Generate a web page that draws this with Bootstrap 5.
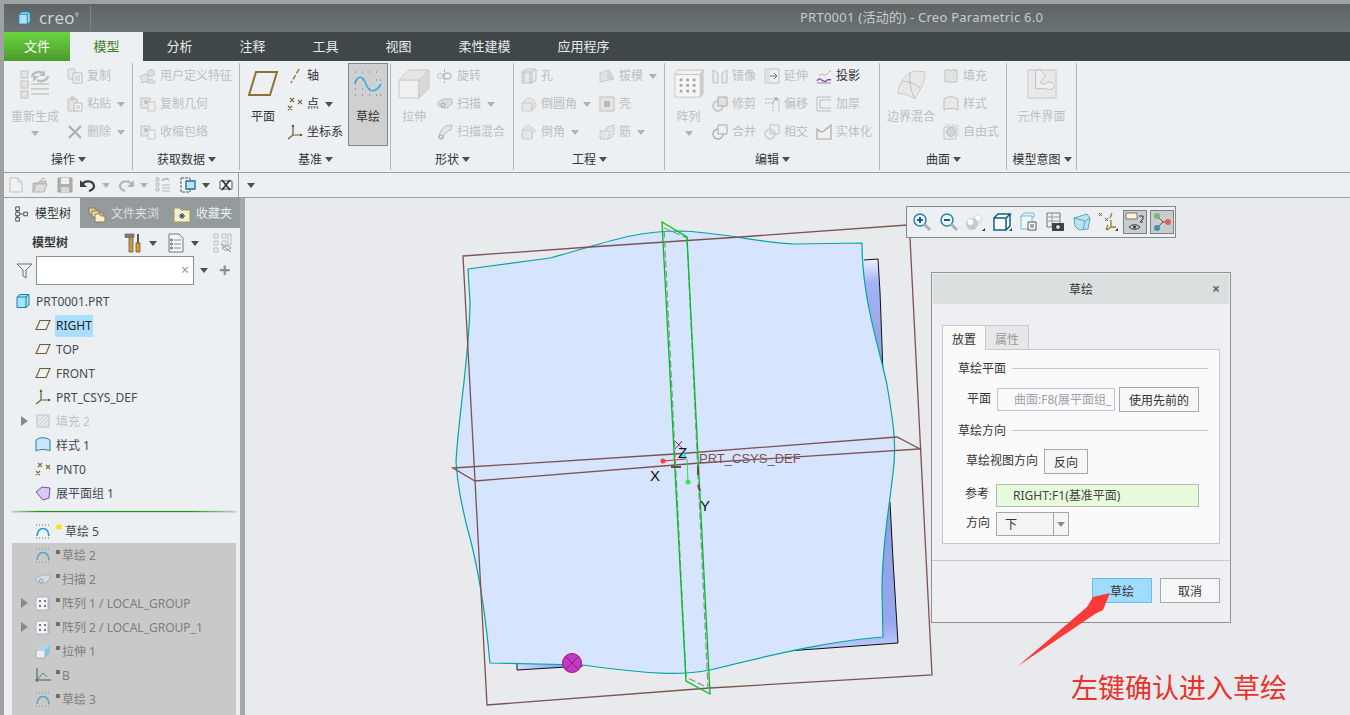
<!DOCTYPE html>
<html lang="zh-CN">
<head>
<meta charset="utf-8">
<title>PRT0001 (活动的) - Creo Parametric 6.0</title>
<link rel="stylesheet" href="https://cdn.jsdelivr.net/npm/bootstrap@5.3.0/dist/css/bootstrap.min.css">
<style>
html,body{height:715px;overflow:hidden;margin:0}
body{background:#a0a2a2;font:12px/16px "Noto Sans","Noto Sans CJK SC",sans-serif;color:#333}
.app{height:715px;padding:4px 0 0 4px}
.titlebar{height:28px;background:linear-gradient(#5d6465,#6b7374);color:#c9cccb}
.logo-cube{width:15px;height:16px;margin-left:13px}
.logo-word{font:17px/28px "Open Sans",sans-serif;color:#d5d8d8;margin-left:7px;letter-spacing:.2px}
.logo-reg{font-size:5px;vertical-align:top;line-height:22px}
.logo-sep{width:1px;height:24px;background:#7f8888;margin-left:11px}
.app-title{position:absolute;left:796px;top:4px;font-size:13px;line-height:18px;letter-spacing:.25px}
.tabrow{height:29px;background:#3f4748}
.tabrow .nav-link{height:29px;padding:6px 23.5px;font-size:13px;line-height:17px;color:#e8ecec;border:0;border-radius:0}
.tabrow .tab-file{padding:6px 20px;background:linear-gradient(#6ad53f,#4b9a2f);color:#fff}
.tabrow .tab-on{background:#edf0f2;color:#3f7a1e}
.ribbon{height:112px;background:#edf0f2;border-bottom:1px solid #9b9e9f}
.rgroup{height:111px;position:relative;display:flex;flex-direction:column}
.rgroup::after{content:"";position:absolute;right:0;top:2px;bottom:2px;width:1px;background:#b4b7b7}
.rbody{height:85px;display:flex;padding-top:1px}
.rlabel{height:26px;text-align:center;color:#333;line-height:28px}
.g1{width:129px}.g2{width:107px}.g3{width:151px}.g4{width:123px}.g5{width:151px}.g6{width:215px}.g7{width:127px}.g8{width:70px}
.rbig{display:flex;flex-direction:column;align-items:center;padding-top:7px;color:#bcbebe;flex:none}
.rbig svg{width:32px;height:30px;flex:none}
.rbig span{margin-top:10px;white-space:nowrap}
.w62{width:62px}.w46{width:46px}.w44{width:47px}.w69{width:69px}
.rcol{display:flex;flex-direction:column;flex:none}
.cw78{width:78px}.cw52{width:52px}
.pl7{padding-left:7px}.pl1{padding-left:1px}
.ritem{height:28px;display:flex;align-items:center;gap:4px;color:#bcbebe;white-space:nowrap}
.ritem svg{width:16px;height:16px;flex:none}
.on{color:#333}
.caret-d{width:0;height:0;border:4px solid transparent;border-top:5px solid #8b8d8d;border-bottom:0;display:inline-block;flex:none}
.caret-k{border-top-color:#4b4f50}
.caret-l{border-top-color:#b0b2b2}
.ritem .caret-d{margin-left:2px}
.rbig .caret-d{margin-top:6px}
.rlabel .caret-d{margin-left:3px;vertical-align:2px}
.sketchbtn{width:40px;height:83px;margin:1px 3px 0 auto;background:#cfd0d2;border:1px solid #85888a;display:flex;flex-direction:column;align-items:center;padding-top:5px;color:#333}
.sketchbtn svg{width:28px;height:28px}
.sketchbtn span{margin-top:12px}
.qat{height:25px;background:#edf0f2;border-bottom:1px solid #9b9e9f}
.qat-l{width:235px;height:24px;border-right:1px solid #9b9e9f;padding-left:4px}
.qat svg{width:16px;height:16px;flex:none}
.qm6{margin-left:6px}.qm7{margin-left:7px}.qm8{margin-left:8px}.qm9{margin-left:9px}
.main{height:518px}
.side{width:236px;background:#edf0f2;height:518px;overflow:hidden;flex:none}
.side-tabs{height:30px;background:#939b9c;color:#eef0f0}
.stab{height:30px;display:flex;align-items:center;gap:5px;white-space:nowrap;padding-top:1px}
.stab svg{width:18px;height:18px;flex:none}
.stab-on{width:76px;background:#edf0f2;color:#333;padding-left:10px}
.stab-on svg{width:16px;height:16px}
.stab-2{width:81px;padding-left:8px}
.stab-3{padding-left:12px}
.fadew{opacity:.8}
.tree-top{height:27px;padding:3px 8px 0 28px}
.tree-top b{font-weight:700;color:#3a3a3a}
.tree-top .tool{width:18px;height:20px;flex:none}
.tree-top .toolw{width:20px}
.tm7{margin-right:7px}.tm10{margin-right:10px}.tm6{margin-right:6px}.tm13{margin-right:13px}
.filter{height:30px;padding-left:12px}
.filter>svg{width:17px;height:17px;margin-right:3px}
.search-box{width:158px;height:29px;border:1px solid #8b8e8e;background:#fff;position:relative}
.search-x{position:absolute;right:4px;top:5px;color:#9a9a9a;font-size:14px}
.plus-g{font-size:20px;line-height:20px;color:#8e9090;font-weight:700;margin-left:11px}
.tree{padding-top:4px}
.trow{height:24px;display:flex;align-items:center;padding-left:31px;padding-top:2px;white-space:nowrap;color:#3f4a55;position:relative}
.trow>svg{width:16px;height:16px;margin-right:5px;flex:none;margin-top:-2px}
.trow-root{padding-left:11px}
.tsel{background:#aadeff;padding:3px 1px;margin-left:-1px;color:#222}
.tdim{color:#c0c2c2}
.tri{position:absolute;left:17px;top:7px;width:0;height:0;border:5px solid transparent;border-left:7px solid #888a8a;border-right:0}
.grayblk .tri{left:9px}
.tsep{height:14px;padding:6px 4px 0 8px}
.tsep div{height:1px;background:linear-gradient(90deg,#c7d2c4,#0e9a14 12%,#0e9a14 80%,#c7d2c4);box-shadow:0 1px 0 #cfd6cf,0 -1px 0 #dfe4df}
.grayblk{background:#c9c9c9;margin:0 4px 0 8px;height:172px}
.grayblk .trow{padding-left:23px;color:#7d7f80}
.mk{display:inline-block;width:4px;height:4px;background:#6e7070;margin-right:2px;align-self:flex-start;margin-top:5px;flex:none}
.trow>svg.star-y{width:6px;height:6px;margin:3px 3px 0 0;align-self:flex-start;flex:none}
.gutter{width:5px;background:#a4a8a8;flex:none}
.canvas{flex:1;position:relative;background:#e8eaed;overflow:hidden}
.canvas-svg{display:block;width:1105px;height:518px}
.ftool{position:absolute;left:661px;top:8px;width:270px;height:32px;background:#edf0f2;border:1px solid #85888a;padding-left:2px}
.ftool svg{width:20px;height:20px;flex:none}
.fcell{width:26.6px;height:30px;display:flex;align-items:center;justify-content:center;flex:none}
.fon{background:#c9cbcd;border:1px solid #7d8082;height:24px;width:24px;margin:0 1.3px}
.dlg{position:absolute;left:686px;top:74px;width:300px;height:351px;background:#eeeff2;border:1px solid #8f9292}
.dlg-h{height:30px;margin:1px 1px 0;background:#dcdfe0;text-align:center;line-height:32px;color:#333;position:relative}
.dlg-x{position:absolute;right:9px;top:-1px;font-weight:700;font-size:14px;color:#666}
.dlg-body{padding:21px 10px 0}
.dlg-tabs{height:24px}
.dtab{height:24px;width:44px;text-align:center;line-height:27px;border:1px solid #c6c8c9;border-bottom:0;background:#e6e7e9;color:#9a9c9c}
.dtab-on{background:#fafafb;color:#333;height:25px;position:relative;z-index:2;width:44px;margin-right:-1px}
.dpanel{height:195px;width:278px;border:1px solid #c6c8c9;background:#fafafb;padding:0 11px 0 15px}
.dp-sec{height:36px;display:flex;align-items:center;gap:6px;padding-top:1px}
.dp-sec i{flex:1;height:1px;background:#c6c8c9}
.dp-row{display:flex;align-items:flex-end;white-space:nowrap}
.dp-row label{line-height:18px;padding-bottom:4px;margin:0}
.r1{height:26px;padding-left:9px;gap:6px}
.r2{height:26px;padding-left:8px;gap:6px}
.r3{height:23px;margin-top:10px;padding-left:7px;gap:7px}
.r4{height:24px;margin-top:5px;padding-left:8px;gap:6px}
.dinput{border:1px solid #c4c4cc;background:#fafafd;color:#a0a0a4;white-space:nowrap;overflow:hidden;padding-left:16px;line-height:22px;height:23px;margin-bottom:1px}
.i-srf{width:118px}
.i-ref{width:203px;margin:0;border-color:#b6b8b8;background:#e8fadc;color:#444}
.dbtn{border:1px solid #a6a8a8;background:#f6f6f7;text-align:center;color:#333;padding:2px 0 0;height:25px;line-height:18px}
.b-prev{width:80px;margin-left:-2px}
.b-rev{width:44px}
.d-sel{width:73px;height:24px;border:1px solid #a6a8a8;background:#f4f4f5;display:flex;line-height:24px;color:#333}
.d-sel span{flex:1;padding-left:8px}
.d-sel em{width:15px;border-left:1px solid #a6a8a8;display:flex;align-items:center;justify-content:center}
.dline{height:1px;margin-top:16px;background:#c6c8c9}
.dfoot{padding:17px 10px 0 0;gap:8px}
.dok{background:#a0dcff;border-color:#62bfee}
.dbtn-b{width:60px}
.arrow-ov{position:absolute;left:770px;top:375px;width:110px;height:100px}
.note{position:absolute;left:826px;top:471px;font:27px/36px "Noto Sans CJK SC",sans-serif;color:#e8322a;white-space:nowrap}
.g3 .rbig{color:#333}
</style>
</head>
<body>
<svg width="0" height="0" class="position-absolute">
<defs>
<symbol id="cube" viewBox="0 0 16 16"><path d="M2 4 5 1.500h9V12l-3 2.500H2z" fill="#a9e2f8" stroke="#1f7fa8"/><path d="M11 14.500V4H2M11 4l3-2.500" fill="none" stroke="#1f7fa8"/></symbol>
<symbol id="regen" viewBox="0 0 32 30"><g fill="#e4e4e4" stroke="#c0c0c0"><rect x="2" y="2" width="7" height="7"/><rect x="2" y="12" width="7" height="7"/><rect x="2" y="22" width="7" height="7"/></g><path d="M13 8a7 6 0 0 1 12-3M29 7a7 6 0 0 1-11 4" fill="none" stroke="#bdbdbd" stroke-width="2.500"/><path d="M26 1v6h-6zM14 13V7h6z" fill="#bdbdbd"/><path d="M12 15h18M12 20h18M12 25h18" stroke="#c4c4c4" stroke-width="1.500"/></symbol>
<symbol id="copy" viewBox="0 0 16 16"><path d="M1 1h7v10H1z" fill="#e8e8e8" stroke="#c4c4c4"/><path d="M6 5h9v10H6z" fill="#f2f2f2" stroke="#bcbcbc"/><path d="M8 8h5M8 10h5M8 12h5" stroke="#c0c0c0"/></symbol>
<symbol id="paste" viewBox="0 0 16 16"><path d="M1 3h9v12H1z" fill="#e4e4e4" stroke="#c0c0c0"/><path d="M4 1h3v3H4z" fill="#d4d4d4" stroke="#c0c0c0"/><path d="M7 7h8v8H7z" fill="#f2f2f2" stroke="#bcbcbc"/><path d="M9 10h4M9 12h4" stroke="#c0c0c0"/></symbol>
<symbol id="del" viewBox="0 0 16 16"><path d="M2 2l12 12M14 2 2 14" stroke="#aeaeae" stroke-width="2.400"/></symbol>
<symbol id="udf" viewBox="0 0 16 16"><rect x="1" y="7" width="7" height="7" fill="#e4e4e4" stroke="#c4c4c4" transform="rotate(-15 4 10)"/><circle cx="11" cy="5" r="3.500" fill="#dedede" stroke="#c8c8c8"/><path d="M7 15c0-5 8-5 8 0z" fill="#dedede" stroke="#c8c8c8"/></symbol>
<symbol id="cgeo" viewBox="0 0 16 16"><path d="M1 2h9v10H1z" fill="#e6e6e6" stroke="#c0c0c0"/><path d="M8 6h7v9H8z" fill="#efefef" stroke="#c8c8c8"/><path d="M4 4l3 3M7 4v3H4" stroke="#a8a8a8" fill="none"/></symbol>
<symbol id="plane" viewBox="0 0 32 30"><path d="M9 3h21L23 26H2z" fill="none" stroke="#8f7233" stroke-width="2"/></symbol>
<symbol id="tplane" viewBox="0 0 16 16"><path d="M5 3.500h10L11 12.500H1z" fill="none" stroke="#6e5a30" stroke-width="1.100"/></symbol>
<symbol id="axis" viewBox="0 0 16 16"><path d="M12 1 4 15" stroke="#8f7233" stroke-width="1.400" stroke-dasharray="5 2" fill="none"/></symbol>
<symbol id="pt" viewBox="0 0 16 16"><path d="M3 1l4 4M7 1 3 5M11 3l4 4M15 3l-4 4M1 9l4 4M5 9l-4 4" stroke="#7c6a3c" stroke-width="1.200" fill="none" transform="translate(0 1)"/></symbol>
<symbol id="csys" viewBox="0 0 16 16"><path d="M6 1v10l-5 4M6 11h9" fill="none" stroke="#6e5a30" stroke-width="1.200"/><path d="M4.500 3 6 0l1.500 3zM13 9.500l3 1.500-3 1.500z" fill="#6e5a30"/></symbol>
<symbol id="sketch" viewBox="0 0 28 28"><path d="M1 15c2-9 8-9 11 0 3 9 10 9 15 0" fill="none" stroke="#39aee0" stroke-width="1.700"/><path d="M1 3h1M8 3h1M15 3h1M22 3h1M1 12h1M8 11h1M22 11h1M26 11h1M1 20h1M8 20h1M15 20h1M1 26h1M8 26h1M15 26h1M22 26h1M26 26h1" stroke="#6a6a6a"/></symbol>
<symbol id="extrude" viewBox="0 0 32 30"><path d="M1 11h20v18H1z" fill="#f0f0f0" stroke="#c8c8c8"/><path d="M1 11 11 1h20L21 11z" fill="#e6e6e6" stroke="#c8c8c8"/><path d="M21 11 31 1v18L21 29z" fill="#d8d8d8" stroke="#c8c8c8"/></symbol>
<symbol id="rev" viewBox="0 0 16 16"><ellipse cx="10" cy="8" rx="4" ry="3" fill="none" stroke="#bcbcbc" stroke-width="1.500"/><ellipse cx="3" cy="8" rx="2.500" ry="2.500" fill="none" stroke="#c4c4c4"/><path d="M7.500 1v14" stroke="#b0b0b0" stroke-dasharray="3 1"/></symbol>
<symbol id="sweep" viewBox="0 0 16 16"><path d="M1 6 6 3h9v5l-5 4H5L1 9z" fill="#dcdcdc" stroke="#bcbcbc"/><circle cx="6" cy="9" r="2" fill="none" stroke="#a8a8a8"/></symbol>
<symbol id="tsweep" viewBox="0 0 16 16"><path d="M1 7 7 4h8v4l-5 4H5L1 10z" fill="#d8dde0" stroke="#a8b4ba"/><circle cx="6" cy="10" r="2" fill="none" stroke="#8aa0aa"/></symbol>
<symbol id="sblend" viewBox="0 0 16 16"><path d="M2 12C4 4 8 1 15 1l-1 5C9 7 7 10 6 15l-4-1z" fill="#e4e4e4" stroke="#bcbcbc"/><circle cx="4" cy="13" r="2" fill="none" stroke="#a8a8a8"/></symbol>
<symbol id="hole" viewBox="0 0 16 16"><path d="M1 4h10v11H1zM1 4l4-3h10L11 4M11 15l4-3V1" fill="#e8e8e8" stroke="#c0c0c0"/><ellipse cx="6" cy="4" rx="3" ry="1.500" fill="#d4d4d4"/><path d="M3 4v11M9 4v11" stroke="#bcbcbc"/></symbol>
<symbol id="round" viewBox="0 0 16 16"><path d="M1 7h10v8H1zM1 7l6-5c5 0 8 3 8 8l-4 5V7" fill="#e6e6e6" stroke="#cccccc"/></symbol>
<symbol id="chamf" viewBox="0 0 16 16"><path d="M1 6l6-5 8 6-4 2v6H1z" fill="#e6e6e6" stroke="#cccccc"/><path d="M1 6h10v9" fill="none" stroke="#ccc"/></symbol>
<symbol id="draft" viewBox="0 0 16 16"><path d="M1 5l9-3 5 9-14 3z" fill="#e2e2e2" stroke="#c8c8c8"/><path d="M9 2l6 9H8z" fill="#d4d4d4"/></symbol>
<symbol id="shell" viewBox="0 0 16 16"><path d="M1 1h14v14H1z" fill="#e4e4e4" stroke="#c0c0c0"/><path d="M5 5h6v6H5z" fill="#b8b8b8"/></symbol>
<symbol id="rib" viewBox="0 0 16 16"><path d="M1 7h9v8H1zM10 15l5-5V1L8 3 6 7" fill="#e4e4e4" stroke="#b8b8b8" stroke-dasharray="2 1"/></symbol>
<symbol id="pattern" viewBox="0 0 32 32"><path d="M1 6 4 1h27l-3 5z" fill="#f0f0f0" stroke="#c4c4c4"/><path d="M28 6l3-5v25l-3 4z" fill="#d0d0d0" stroke="#c4c4c4"/><path d="M1 6h27v24H1z" fill="#f6f6f6" stroke="#c4c4c4"/><path fill="#a8a8a8" d="M6 10h3v3H6zM13 10h3v3h-3zM20 10h3v3h-3zM6 16h3v3H6zM13 16h3v3h-3zM20 16h3v3h-3zM6 22h3v3H6zM13 22h3v3h-3zM20 22h3v3h-3z"/></symbol>
<symbol id="tpat" viewBox="0 0 16 16"><path d="M1 2h12v13H1z" fill="#f4f4f8" stroke="#b0b0bc"/><path d="M13 2l2-1v13l-2 1z" fill="#b8b8cc"/><path fill="#777" d="M4 5h2v2H4zM9 5h2v2H9zM4 10h2v2H4zM9 10h2v2H9z"/></symbol>
<symbol id="mirror" viewBox="0 0 16 16"><path d="M1 2l5 3v10H1zM15 2l-5 3v10h5z" fill="#eaeaea" stroke="#bcbcbc"/></symbol>
<symbol id="trim" viewBox="0 0 16 16"><circle cx="6" cy="10" r="5" fill="#ececec" stroke="#bcbcbc" stroke-width="1.300"/><path d="M6 1h9v9H6z" fill="#e0e0e0" stroke="#a8a8a8"/></symbol>
<symbol id="merge" viewBox="0 0 16 16"><circle cx="6" cy="10" r="5" fill="none" stroke="#a8a8a8" stroke-width="1.300"/><path d="M6 1h9v9H6z" fill="#f0f0f0" stroke="#a8a8a8"/></symbol>
<symbol id="isect" viewBox="0 0 16 16"><circle cx="6" cy="10" r="5" fill="none" stroke="#c8c8c8" stroke-width="1.300"/><path d="M6 1h9v9H6z" fill="none" stroke="#c0c0c0"/><path d="M6 5h4v5H6z" fill="#d8d8d8"/></symbol>
<symbol id="ext" viewBox="0 0 16 16"><path d="M1 1h14v14H1z" fill="#f0f0f0" stroke="#bcbcbc"/><path d="M1 1h5v14H1z" fill="#e0e0e0"/><path d="M6 8h6M10 5l3 3-3 3" fill="none" stroke="#6e6e6e"/></symbol>
<symbol id="offs" viewBox="0 0 16 16"><path d="M1 7h8M9 7v8" stroke="#b8b8b8" stroke-dasharray="2 1" fill="none"/><path d="M1 3h14v12" fill="none" stroke="#c4c4c4"/><path d="M8 7l5-5M10 2h3v3" fill="none" stroke="#9a9a9a"/></symbol>
<symbol id="proj" viewBox="0 0 16 16"><path d="M1 13c3-6 6 3 9 0 2-2 3-2 5-1" fill="none" stroke="#8a3fb8" stroke-width="1.400"/><path d="M3 8c3-5 5 2 8-2 1-2 3-3 4-3" fill="none" stroke="#b8b8b8"/><path d="M1 15h14" stroke="#8090a0"/></symbol>
<symbol id="thick" viewBox="0 0 16 16"><path d="M1 1h14M1 1v14h14M4 4h11M4 4v8h11" fill="none" stroke="#bcbcbc"/></symbol>
<symbol id="solid" viewBox="0 0 16 16"><path d="M1 5l4 3 3-1 7-6v14H1z" fill="#f0f0f0" stroke="#a8a8a8" stroke-width="1.200"/></symbol>
<symbol id="bblend" viewBox="0 0 32 32"><path d="M2 26C3 15 10 4 20 2l11 1c0 11-6 21-11 29C14 28 8 26 2 26z" fill="#e8e8e8" stroke="#c8c8c8"/><path d="M7 13c7 0 14 3 19 8M15 4c-1 9 0 18 5 27" fill="none" stroke="#bcbcbc"/></symbol>
<symbol id="fill" viewBox="0 0 16 16"><path d="M2 2h12v12H2z" fill="#e8e8e8" stroke="#c0c0c0"/><path d="M3 9l6-6M3 13 13 3M7 13l6-6" stroke="#cfcfcf"/></symbol>
<symbol id="style" viewBox="0 0 16 16"><path d="M1 3c4-3 10-3 14 0v11c-4-2-10-2-14 0z" fill="#e8e8e8" stroke="#bcbcbc"/></symbol>
<symbol id="tstyle" viewBox="0 0 16 16"><path d="M1 3c4-3 10-3 14 0v11c-4-2-10-2-14 0z" fill="#c4e8f8" stroke="#2f7ca0"/></symbol>
<symbol id="free" viewBox="0 0 16 16"><path d="M1 3h12v12H1z" fill="none" stroke="#c4c4c4"/><path d="M3 1h12v12" fill="none" stroke="#c4c4c4" stroke-dasharray="2 1"/><circle cx="8" cy="8" r="4.500" fill="#d4d4d4" stroke="#bcbcbc"/></symbol>
<symbol id="comp" viewBox="0 0 32 32"><path d="M1 1h30v30H1z" fill="#e8e8e8" stroke="#c8c8c8"/><path d="M9 1h6c0 3 4 3 4 6s-4 3-4 6v3h5c0-3 9-3 9 2s-8 4-9 3H9z" fill="#efefef" stroke="#bcbcbc"/></symbol>
<symbol id="qnew" viewBox="0 0 16 16"><path d="M2 1h8l4 4v10H2z" fill="#f2f2f2" stroke="#c0c0c0"/><path d="M10 1v4h4" fill="none" stroke="#c0c0c0"/></symbol>
<symbol id="qopen" viewBox="0 0 16 16"><path d="M1 6h5l2-2h6v3H5L1 15z" fill="#d0d0d0" stroke="#b0b0b0"/><path d="M1 15l3-8h11l-3 8z" fill="#dedede" stroke="#b0b0b0"/><path d="M9 3c1-2 3-2 4-1" fill="none" stroke="#a8a8a8"/></symbol>
<symbol id="qsave" viewBox="0 0 16 16"><path d="M1 1h14v14H1z" fill="#b0b0b0" stroke="#a0a0a0"/><path d="M4 1h8v6H4z" fill="#eee"/><path d="M4 10h8v5H4z" fill="#d8d8d8"/></symbol>
<symbol id="qundo" viewBox="0 0 16 16"><path d="M2 8c2-5 11-5 12 1 0 3-2 4-5 5" fill="none" stroke="#3c3c3c" stroke-width="2.200"/><path d="M0 3v7h7z" fill="#3c3c3c"/></symbol>
<symbol id="qredo" viewBox="0 0 16 16"><path d="M14 8C12 3 3 3 2 9c0 3 2 4 5 5" fill="none" stroke="#b4b4b4" stroke-width="2.200"/><path d="M16 3v7H9z" fill="#b4b4b4"/></symbol>
<symbol id="qregen" viewBox="0 0 16 16"><path d="M1 1h3v3H1zM1 6h3v3H1zM1 11h3v3H1z" fill="#e4e4e4" stroke="#b8b8b8"/><path d="M7 8h8M7 11h8M7 14h8" stroke="#b8b8b8"/><path d="M7 4a4 3 0 0 1 7-1" fill="none" stroke="#b0b0b0" stroke-width="1.500"/></symbol>
<symbol id="qwin" viewBox="0 0 16 16"><path d="M1 1h9v14H1z" fill="#f4f4f4" stroke="#555" stroke-dasharray="3 1"/><path d="M6 4h9v8H6z" fill="#bfe4f4" stroke="#1f6f94" stroke-width="1.300"/></symbol>
<symbol id="qclose" viewBox="0 0 16 16"><path d="M2 4h12v8H2z" fill="#f6f6f6" stroke="#555"/><path d="M4 3l8 10M12 3 4 13" stroke="#333" stroke-width="1.700"/></symbol>
<symbol id="stree" viewBox="0 0 18 18"><path d="M3.500 5v9M6 9h4" fill="none" stroke="#333"/><path d="M2 1h4v4H2zM2 7h4v4H2zM2 13h4v4H2zM11 7h4v4h-4z" fill="#fff" stroke="#333"/></symbol>
<symbol id="sfold" viewBox="0 0 18 18"><path d="M1 3h6l1 2h4v4H1z" fill="#e8cf95" stroke="#8a7a50"/><path d="M4 6h6l1 2h4v4H4z" fill="#f0dca8" stroke="#8a7a50"/><path d="M7 9h5l1 2h4v6H7z" fill="#f9efcc" stroke="#8a7a50"/></symbol>
<symbol id="sfav" viewBox="0 0 18 18"><path d="M1 3h6l1 2h9v12H1z" fill="#f6eec8" stroke="#a89860"/><path d="M6 11h6M9 8v6M7 9l4 4M11 9l-4 4" stroke="#1d3f7a"/></symbol>
<symbol id="hammer" viewBox="0 0 18 20"><path d="M1 1h9v3H9v15H5V4H1z" fill="#c49a50" stroke="#5c4a28" stroke-width=".7"/><path d="M1 1h9v4H1z" fill="#7a7a7a"/><path d="M13 1h2v9h-2z" fill="#5a5a5a"/><path d="M12 10h4v9h-4z" fill="#d8a020" stroke="#5c4a28" stroke-width=".7"/></symbol>
<symbol id="tlist" viewBox="0 0 18 20"><path d="M2 1h10l4 4v14H2z" fill="#f6f6f6" stroke="#777"/><path d="M7 7h7M7 11h7M7 15h7" stroke="#888"/><circle cx="4.500" cy="7" r="1" fill="none" stroke="#555"/><circle cx="4.500" cy="11" r="1" fill="none" stroke="#555"/><circle cx="4.500" cy="15" r="1" fill="none" stroke="#555"/></symbol>
<symbol id="thide" viewBox="0 0 20 20"><path d="M2 1h4v4H2zM2 8h4v4H2zM2 15h4v4H2zM10 1h4v4h-4zM10 8h4v4h-4zM16 1h3v11h-3z" fill="none" stroke="#bcbcbc"/><path d="M10 15c3-3 6-3 9 0-3 3-6 3-9 0zM9 11l10 8" fill="none" stroke="#909090"/></symbol>
<symbol id="funnel" viewBox="0 0 17 17"><path d="M1 2h15l-6 6v8l-3-2V8z" fill="#f2f2f2" stroke="#6b6e6e"/></symbol>
<symbol id="quilt" viewBox="0 0 16 16"><path d="M1 7 7 2l8 1-1 10-6 2z" fill="#d8c8f2" stroke="#6f54a0"/></symbol>
<symbol id="tsk" viewBox="0 0 16 16"><path d="M2 13c1-10 11-10 12 0" fill="none" stroke="#2e9cc8" stroke-width="1.600"/><path d="M1 2h14M1 15h14" stroke="#666" stroke-dasharray="1 2"/></symbol>
<symbol id="tsk2" viewBox="0 0 16 16"><path d="M2 13c1-10 11-10 12 0" fill="none" stroke="#58a4c4" stroke-width="1.600"/><path d="M1 2h14M1 15h14" stroke="#8a8a8a" stroke-dasharray="1 2"/></symbol>
<symbol id="textr" viewBox="0 0 16 16"><path d="M1 7h9v8H1z" fill="#eee" stroke="#aaa"/><path d="M1 7l5-5h9l-5 5z" fill="#b0d8ea"/><path d="M10 7l5-5v8l-5 5z" fill="#8cc4de"/></symbol>
<symbol id="tgraph" viewBox="0 0 16 16"><path d="M2 1v14M0 13h16" stroke="#555" fill="none"/><path d="M3 12l5-6 4 4" fill="none" stroke="#3a7fa0"/></symbol>
<symbol id="ystar" viewBox="0 0 6 6"><path d="M3 0v6M0 1.500l6 3M6 1.500l-6 3" stroke="#f5e400" stroke-width="1.400"/></symbol>
<symbol id="zin" viewBox="0 0 20 20"><circle cx="8" cy="8" r="6" fill="#eaf6fb" stroke="#2f7ea6" stroke-width="1.500"/><path d="M5 8h6M8 5v6" stroke="#1f5f88" stroke-width="2"/><path d="M12 12l6 6" stroke="#b0b0b0" stroke-width="3"/></symbol>
<symbol id="zout" viewBox="0 0 20 20"><circle cx="8" cy="8" r="6" fill="#eaf6fb" stroke="#2f7ea6" stroke-width="1.500"/><path d="M5 8h6" stroke="#1f5f88" stroke-width="2"/><path d="M12 12l6 6" stroke="#b0b0b0" stroke-width="3"/></symbol>
<symbol id="shade" viewBox="0 0 20 20"><circle cx="13" cy="7" r="5" fill="#e2e2e2"/><circle cx="13" cy="6" r="2.500" fill="#fafafa"/><circle cx="7" cy="12" r="6" fill="#c8c8c8"/><circle cx="5.500" cy="10" r="3" fill="#fafafa"/><path d="M17 19h3v-3z" fill="#333"/></symbol>
<symbol id="vcube" viewBox="0 0 20 20"><path d="M2 6h12v12H2zM2 6l4-4h12l-4 4M14 18l4-4V2" fill="#fff" stroke="#0f5f84" stroke-width="1.500"/><path d="M17 19h3v-3z" fill="#333"/></symbol>
<symbol id="vsaved" viewBox="0 0 20 20"><path d="M2 4l3-3h10v4H2z" fill="#dff2fa" stroke="#7fb7d0"/><path d="M2 4h11v13H2z" fill="#f0f8fc" stroke="#7fb7d0"/><path d="M9 10h8v8H9z" fill="#fff" stroke="#555"/><path d="M11 13h4M11 15h4" stroke="#555"/></symbol>
<symbol id="vcam" viewBox="0 0 20 20"><path d="M2 1h13v14H2z" fill="#f0f0f0" stroke="#777"/><path d="M2 5h13M2 9h13M7 1v14" stroke="#999"/><path d="M7 11h12v8H7z" fill="#444"/><circle cx="13" cy="15" r="2.500" fill="#ddd" stroke="#222"/></symbol>
<symbol id="vglass" viewBox="0 0 20 20"><path d="M2 6l13-4 3 4-2 11-9 1-4-4z" fill="#bde2f0" stroke="#5aa6c6"/><path d="M2 6l11 3 5-3M13 9l-2 9" fill="none" stroke="#5aa6c6"/></symbol>
<symbol id="vdat" viewBox="0 0 20 20"><path d="M1 1l3 3M4 1 1 4M7 6l3 3M10 6 7 9" stroke="#6e5a30"/><path d="M14 1l-2 5M8 18l2-5M13 8v7h5M13 15l-4 3" stroke="#9a7a30" stroke-width="1.300" fill="none"/><path d="M17 19h3v-3z" fill="#333"/></symbol>
<symbol id="vdisp" viewBox="0 0 20 20"><path d="M1 1h11v6H1z" fill="#fdf3d8" stroke="#777"/><path d="M14 4h4v3l-3 3h3M4 15c3-3 8-3 11 0-3 3-8 3-11 0z" fill="none" stroke="#333"/><circle cx="9.500" cy="15" r="1.500" fill="#333"/></symbol>
<symbol id="vconn" viewBox="0 0 20 20"><path d="M5 4l6 6-6 6M11 10h5" stroke="#555" fill="none"/><circle cx="5" cy="4" r="3" fill="#78b878"/><circle cx="5" cy="16" r="3" fill="#3f8fb8"/><circle cx="16" cy="10" r="3" fill="#e06060"/></symbol>
<linearGradient id="backblue" x1="0" y1="0" x2="0" y2="1"><stop offset="0" stop-color="#eef2ff"/><stop offset=".2" stop-color="#a4b3f6"/><stop offset="1" stop-color="#8e9ede"/></linearGradient>
<linearGradient id="backblue2" x1="0" y1="0" x2="0" y2="1"><stop offset="0" stop-color="#8e9fe4"/><stop offset=".8" stop-color="#98a8ee"/><stop offset="1" stop-color="#c0ccff"/></linearGradient>
<linearGradient id="backblue3" x1="0" y1="0" x2="1" y2="0"><stop offset="0" stop-color="#d4dcff"/><stop offset=".6" stop-color="#98a8ee"/></linearGradient>
</defs>
</svg>

<div class="app d-flex flex-column">
  <div class="titlebar d-flex align-items-center position-relative">
    <svg class="logo-cube"><use href="#cube"/></svg>
    <span class="logo-word">creo<span class="logo-reg">®</span></span>
    <span class="logo-sep"></span>
    <span class="app-title">PRT0001 (活动的) - Creo Parametric 6.0</span>
  </div>

  <ul class="nav tabrow flex-nowrap">
    <li class="nav-item"><a class="nav-link tab-file" href="#">文件</a></li>
    <li class="nav-item"><a class="nav-link tab-on" href="#">模型</a></li>
    <li class="nav-item"><a class="nav-link" href="#">分析</a></li>
    <li class="nav-item"><a class="nav-link" href="#">注释</a></li>
    <li class="nav-item"><a class="nav-link" href="#">工具</a></li>
    <li class="nav-item"><a class="nav-link" href="#">视图</a></li>
    <li class="nav-item"><a class="nav-link" href="#">柔性建模</a></li>
    <li class="nav-item"><a class="nav-link" href="#">应用程序</a></li>
  </ul>

  <div class="ribbon d-flex">
    <div class="rgroup g1">
      <div class="rbody">
        <div class="rbig w62"><svg><use href="#regen"/></svg><span>重新生成</span><i class="caret-d caret-l"></i></div>
        <div class="rcol pl1">
          <div class="ritem"><svg><use href="#copy"/></svg>复制</div>
          <div class="ritem"><svg><use href="#paste"/></svg>粘贴<i class="caret-d caret-l"></i></div>
          <div class="ritem"><svg><use href="#del"/></svg>删除<i class="caret-d caret-l"></i></div>
        </div>
      </div>
      <div class="rlabel">操作<i class="caret-d caret-k"></i></div>
    </div>
    <div class="rgroup g2">
      <div class="rbody pl7">
        <div class="rcol">
          <div class="ritem"><svg><use href="#udf"/></svg>用户定义特征</div>
          <div class="ritem"><svg><use href="#cgeo"/></svg>复制几何</div>
          <div class="ritem"><svg><use href="#cgeo"/></svg>收缩包络</div>
        </div>
      </div>
      <div class="rlabel">获取数据<i class="caret-d caret-k"></i></div>
    </div>
    <div class="rgroup g3">
      <div class="rbody">
        <div class="rbig w46"><svg><use href="#plane"/></svg><span>平面</span></div>
        <div class="rcol pl1">
          <div class="ritem on"><svg><use href="#axis"/></svg>轴</div>
          <div class="ritem on"><svg><use href="#pt"/></svg>点<i class="caret-d caret-k"></i></div>
          <div class="ritem on"><svg><use href="#csys"/></svg>坐标系</div>
        </div>
        <div class="sketchbtn"><svg><use href="#sketch"/></svg><span>草绘</span></div>
      </div>
      <div class="rlabel">基准<i class="caret-d caret-k"></i></div>
    </div>
    <div class="rgroup g4">
      <div class="rbody">
        <div class="rbig w46"><svg><use href="#extrude"/></svg><span>拉伸</span></div>
        <div class="rcol">
          <div class="ritem"><svg><use href="#rev"/></svg>旋转</div>
          <div class="ritem"><svg><use href="#sweep"/></svg>扫描<i class="caret-d caret-l"></i></div>
          <div class="ritem"><svg><use href="#sblend"/></svg>扫描混合</div>
        </div>
      </div>
      <div class="rlabel">形状<i class="caret-d caret-k"></i></div>
    </div>
    <div class="rgroup g5">
      <div class="rbody pl7">
        <div class="rcol cw78">
          <div class="ritem"><svg><use href="#hole"/></svg>孔</div>
          <div class="ritem"><svg><use href="#round"/></svg>倒圆角<i class="caret-d caret-l"></i></div>
          <div class="ritem"><svg><use href="#chamf"/></svg>倒角<i class="caret-d caret-l"></i></div>
        </div>
        <div class="rcol">
          <div class="ritem"><svg><use href="#draft"/></svg>拔模<i class="caret-d caret-l"></i></div>
          <div class="ritem"><svg><use href="#shell"/></svg>壳</div>
          <div class="ritem"><svg><use href="#rib"/></svg>筋<i class="caret-d caret-l"></i></div>
        </div>
      </div>
      <div class="rlabel">工程<i class="caret-d caret-k"></i></div>
    </div>
    <div class="rgroup g6">
      <div class="rbody">
        <div class="rbig w44"><svg><use href="#pattern"/></svg><span>阵列</span><i class="caret-d caret-l"></i></div>
        <div class="rcol cw52">
          <div class="ritem"><svg><use href="#mirror"/></svg>镜像</div>
          <div class="ritem"><svg><use href="#trim"/></svg>修剪</div>
          <div class="ritem"><svg><use href="#merge"/></svg>合并</div>
        </div>
        <div class="rcol cw52">
          <div class="ritem"><svg><use href="#ext"/></svg>延伸</div>
          <div class="ritem"><svg><use href="#offs"/></svg>偏移</div>
          <div class="ritem"><svg><use href="#isect"/></svg>相交</div>
        </div>
        <div class="rcol">
          <div class="ritem on"><svg><use href="#proj"/></svg>投影</div>
          <div class="ritem"><svg><use href="#thick"/></svg>加厚</div>
          <div class="ritem"><svg><use href="#solid"/></svg>实体化</div>
        </div>
      </div>
      <div class="rlabel">编辑<i class="caret-d caret-k"></i></div>
    </div>
    <div class="rgroup g7">
      <div class="rbody">
        <div class="rbig w62"><svg><use href="#bblend"/></svg><span>边界混合</span></div>
        <div class="rcol pl1">
          <div class="ritem"><svg><use href="#fill"/></svg>填充</div>
          <div class="ritem"><svg><use href="#style"/></svg>样式</div>
          <div class="ritem"><svg><use href="#free"/></svg>自由式</div>
        </div>
      </div>
      <div class="rlabel">曲面<i class="caret-d caret-k"></i></div>
    </div>
    <div class="rgroup g8">
      <div class="rbody">
        <div class="rbig w69"><svg><use href="#comp"/></svg><span>元件界面</span></div>
      </div>
      <div class="rlabel">模型意图<i class="caret-d caret-k"></i></div>
    </div>
  </div>

  <div class="qat d-flex align-items-center">
    <div class="qat-l d-flex align-items-center">
      <svg><use href="#qnew"/></svg><svg class="qm8"><use href="#qopen"/></svg><svg class="qm9"><use href="#qsave"/></svg><svg class="qm7"><use href="#qundo"/></svg><i class="caret-d caret-l qm6"></i><svg class="qm8"><use href="#qredo"/></svg><i class="caret-d caret-l qm6"></i><svg class="qm7"><use href="#qregen"/></svg><svg class="qm9"><use href="#qwin"/></svg><i class="caret-d caret-k qm6"></i><svg class="qm8"><use href="#qclose"/></svg>
    </div>
    <i class="caret-d caret-k qm8"></i>
  </div>

  <div class="main d-flex">
    <aside class="side">
      <div class="side-tabs d-flex">
        <div class="stab stab-on"><svg><use href="#stree"/></svg>模型树</div>
        <div class="stab stab-2"><svg><use href="#sfold"/></svg><span class="fadew">文件夹浏</span></div>
        <div class="stab stab-3"><svg><use href="#sfav"/></svg>收藏夹</div>
      </div>
      <div class="tree-top d-flex align-items-center">
        <b>模型树</b>
        <svg class="tool ms-auto tm7"><use href="#hammer"/></svg><i class="caret-d caret-k tm10"></i>
        <svg class="tool tm6"><use href="#tlist"/></svg><i class="caret-d caret-k tm13"></i>
        <svg class="tool toolw"><use href="#thide"/></svg>
      </div>
      <div class="filter d-flex align-items-center">
        <svg><use href="#funnel"/></svg>
        <div class="search-box"><span class="search-x">×</span></div>
        <i class="caret-d caret-k qm6"></i>
        <span class="plus-g">+</span>
      </div>
      <div class="tree">
        <div class="trow trow-root"><svg><use href="#cube"/></svg>PRT0001.PRT</div>
        <div class="trow"><svg><use href="#tplane"/></svg><span class="tsel">RIGHT</span></div>
        <div class="trow"><svg><use href="#tplane"/></svg>TOP</div>
        <div class="trow"><svg><use href="#tplane"/></svg>FRONT</div>
        <div class="trow"><svg><use href="#csys"/></svg>PRT_CSYS_DEF</div>
        <div class="trow tdim"><i class="tri"></i><svg><use href="#fill"/></svg>填充 2</div>
        <div class="trow"><svg><use href="#tstyle"/></svg>样式 1</div>
        <div class="trow"><svg><use href="#pt"/></svg>PNT0</div>
        <div class="trow"><svg><use href="#quilt"/></svg>展平面组 1</div>
        <div class="tsep"><div></div></div>
        <div class="trow"><svg><use href="#tsk"/></svg><svg class="star-y"><use href="#ystar"/></svg>草绘 5</div>
        <div class="grayblk">
          <div class="trow"><svg><use href="#tsk2"/></svg><i class="mk"></i>草绘 2</div>
          <div class="trow"><svg><use href="#tsweep"/></svg><i class="mk"></i>扫描 2</div>
          <div class="trow"><i class="tri"></i><svg><use href="#tpat"/></svg><i class="mk"></i>阵列 1 / LOCAL_GROUP</div>
          <div class="trow"><i class="tri"></i><svg><use href="#tpat"/></svg><i class="mk"></i>阵列 2 / LOCAL_GROUP_1</div>
          <div class="trow"><svg><use href="#textr"/></svg><i class="mk"></i>拉伸 1</div>
          <div class="trow"><svg><use href="#tgraph"/></svg><i class="mk"></i>B</div>
          <div class="trow"><svg><use href="#tsk2"/></svg><i class="mk"></i>草绘 3</div>
        </div>
      </div>
    </aside>
    <div class="gutter"></div>
    <div class="canvas">
      <svg class="canvas-svg" viewBox="245 198 1105 518" font-family="Liberation Sans, sans-serif">
        <polygon points="864,259 878,259 880,292 883,375 860,340 855,260" fill="url(#backblue)"/>
        <polyline points="864,260 878,259 880,292 882,345 883,375" fill="none" stroke="#111"/>
        <polygon points="890,502 898,643 787,651 800,600 870,560" fill="url(#backblue2)"/>
        <polyline points="890,502 893,560 898,643 787,651" fill="none" stroke="#111"/>
        <polygon points="517,655 517,670 583,666 583,655" fill="url(#backblue3)"/>
        <polyline points="517,663 517,670 583,666" fill="none" stroke="#111"/>
        <path d="M468 269 550 258C600 245 630 231 680 231 720 232 760 243 795 244L862 243C862 300 880 350 887 385 893 420 897 445 893 473 889 510 882 545 882 590L883 637C840 640 790 650 710 670 680 676 650 674 583 665L490 663C486 620 478 565 467 527 462 505 458 490 456 462 458 420 470 350 470 302z" fill="#d6e5fd" stroke="#00a6a6" stroke-width="1.200"/>
        <polygon points="463,256 590,247 740,237 907,225 910,238 923,497 932,675 710,688 487,705" fill="none" stroke="#7d5252" stroke-width="1.300"/>
        <polygon points="453,468 675,454 897,437 920,449 700,463 475,481" fill="none" stroke="#7d5252" stroke-width="1.300"/>
        <path d="M664 228 687 238 708 688 686 677 664 228" fill="none" stroke="#8a9090" stroke-width="1.200" stroke-dasharray="7 3"/>
        <polygon points="662,222 687,237 710,694 686,681" fill="none" stroke="#00c020" stroke-width="1.300"/>
        <path d="M663 461 686 459" stroke="#ee2222" fill="none"/>
        <path d="M687 459l1 23" stroke="#33dd33" fill="none"/>
        <path d="M675 441l8 8M682 441l-7 8" stroke="#a0204a"/>
        <path d="M671 467h10M698 466v9M698 485l2 6" stroke="#6b4a4a" stroke-width="2" fill="none"/>
        <circle cx="663" cy="461" r="2.500" fill="#ff3a3a"/><circle cx="688" cy="482" r="2.500" fill="#2fe84a"/><circle cx="683" cy="456" r="3" fill="#2ee4ec"/>
        <text x="699" y="463" font-size="13" fill="#7d5252">PRT_CSYS_DEF</text>
        <text x="650" y="481" font-size="15" fill="#111">X</text>
        <text x="700" y="511" font-size="15" fill="#111">Y</text>
        <text x="678" y="458" font-size="15" fill="#111">Z</text>
        <circle cx="572" cy="663" r="9.500" fill="#b93ccc" stroke="#b0105e"/>
        <path d="M565 656l14 14M579 656l-14 14" stroke="#b0105e"/>
      </svg>

      <div class="ftool d-flex align-items-center">
        <span class="fcell"><svg><use href="#zin"/></svg></span><span class="fcell"><svg><use href="#zout"/></svg></span><span class="fcell"><svg><use href="#shade"/></svg></span><span class="fcell"><svg><use href="#vcube"/></svg></span><span class="fcell"><svg><use href="#vsaved"/></svg></span><span class="fcell"><svg><use href="#vcam"/></svg></span><span class="fcell"><svg><use href="#vglass"/></svg></span><span class="fcell"><svg><use href="#vdat"/></svg></span><span class="fcell fon"><svg><use href="#vdisp"/></svg></span><span class="fcell fon"><svg><use href="#vconn"/></svg></span>
      </div>

      <div class="dlg">
        <div class="dlg-h">草绘<span class="dlg-x">×</span></div>
        <div class="dlg-body">
          <div class="dlg-tabs d-flex">
            <div class="dtab dtab-on">放置</div><div class="dtab">属性</div>
          </div>
          <div class="dpanel">
            <div class="dp-sec">草绘平面<i></i></div>
            <div class="dp-row r1"><label>平面</label><div class="dinput i-srf">曲面:F8(展平面组_</div><button class="dbtn b-prev">使用先前的</button></div>
            <div class="dp-sec">草绘方向<i></i></div>
            <div class="dp-row r2"><label>草绘视图方向</label><button class="dbtn b-rev">反向</button></div>
            <div class="dp-row r3"><label>参考</label><div class="dinput i-ref">RIGHT:F1(基准平面)</div></div>
            <div class="dp-row r4"><label>方向</label><div class="d-sel"><span>下</span><em><i class="caret-d"></i></em></div></div>
          </div>
        </div>
        <div class="dline"></div>
        <div class="dfoot d-flex justify-content-end">
          <button class="dbtn dbtn-b dok">草绘</button>
          <button class="dbtn dbtn-b">取消</button>
        </div>
      </div>

      <svg class="arrow-ov" viewBox="0 0 110 100"><polygon points="3,93 72,34 78,24 95,20 88,37 80,41" fill="#f83a3a"/></svg>
      <div class="note">左键确认进入草绘</div>
    </div>
  </div>
</div>
</body>
</html>
